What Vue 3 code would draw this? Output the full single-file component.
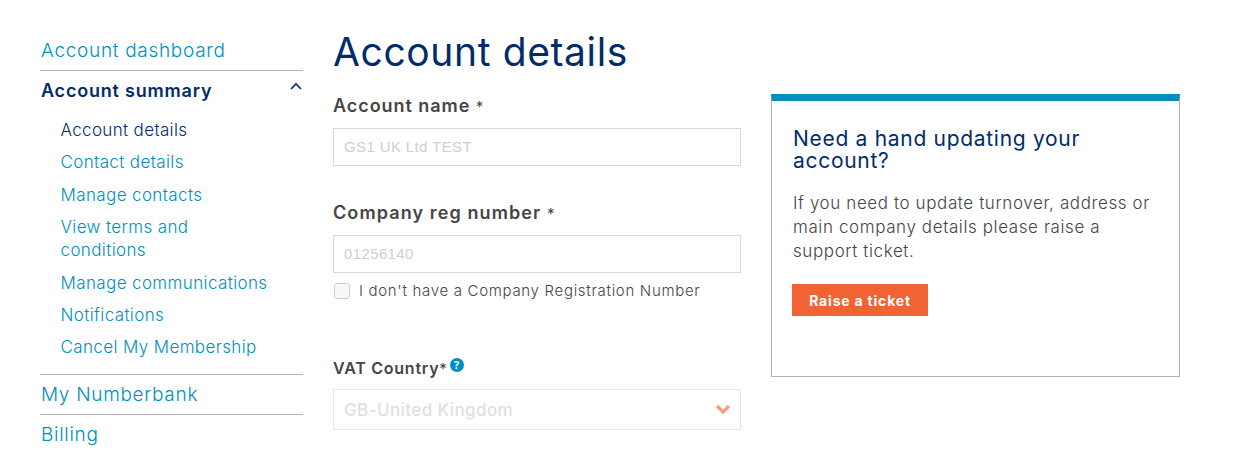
<script setup>
const subLinks = [
  { label: 'Account details', active: true },
  { label: 'Contact details' },
  { label: 'Manage contacts' },
  { label: 'View terms and conditions', wrap: true },
  { label: 'Manage communications' },
  { label: 'Notifications' },
  { label: 'Cancel My Membership' }
]
</script>

<template>
  <div class="page">
    <nav class="side">
      <a class="top first">Account dashboard</a>
      <div class="group">
        <div class="group-head">
          <span>Account summary</span>
          <svg class="caret" width="14" height="8" viewBox="0 0 14 8"><path d="M2 7 L7 2 L12 7" fill="none" stroke="#002c6c" stroke-width="1.6"/></svg>
        </div>
        <ul class="subs">
          <li v-for="l in subLinks" :key="l.label" :class="{ active: l.active, wrap: l.wrap }">{{ l.label }}</li>
        </ul>
      </div>
      <a class="top bordered">My Numberbank</a>
      <a class="top bordered">Billing</a>
    </nav>
    <main class="main">
      <h1>Account details</h1>
      <div class="cols">
        <form class="form">
          <label class="lab first-lab">Account name <span class="star">*</span></label>
          <div class="input">GS1 UK Ltd TEST</div>
          <label class="lab second-lab">Company reg number <span class="star">*</span></label>
          <div class="input">01256140</div>
          <div class="check">
            <span class="box"></span>
            <span>I don't have a Company Registration Number</span>
          </div>
          <div class="lab vat-lab">
            VAT Country<span class="star">*</span>
            <svg class="help" width="14" height="14" viewBox="0 0 14 14">
              <circle cx="7" cy="7" r="7" fill="#008fbe"/>
              <text x="7" y="11" text-anchor="middle" fill="#fff" font-size="11" font-weight="700" font-family="Open Sans, sans-serif">?</text>
            </svg>
          </div>
          <div class="select">
            <span>GB-United Kingdom</span>
            <svg width="16" height="11" viewBox="0 0 16 11"><path d="M2 2 L8 8 L14 2" fill="none" stroke="#fb9c7c" stroke-width="3.2"/></svg>
          </div>
        </form>
        <aside class="card">
          <h2>Need a hand updating your account?</h2>
          <p>If you need to update turnover, address or main company details please raise a support ticket.</p>
          <button type="button" class="btn">Raise a ticket</button>
        </aside>
      </div>
    </main>
  </div>
</template>

<style>
html, body { margin: 0; background: #fff; }
</style>

<style scoped>
.page {
  display: flex;
  height: 451px;
  overflow: hidden;
  box-sizing: border-box;
  padding: 32px 0 0 40px;
  font-family: Inter, sans-serif;
  color: #454545;
}
.side { width: 263px; flex: none; margin-right: 30px; }
.top {
  display: block;
  font-size: 19px;
  font-weight: 300;
  line-height: 26px;
  color: #008fbe;
  letter-spacing: 0.7px;
  padding-left: 1px;
}
.first { height: 38px; padding-top: 6px; box-sizing: border-box; }
.bordered { border-top: 1px solid #b1b3b3; height: 40px; padding-top: 7px; box-sizing: border-box; }
.group { border-top: 1px solid #b1b3b3; }
.group-head {
  display: flex;
  justify-content: space-between;
  font-size: 18px;
  font-weight: 600;
  line-height: 26px;
  padding: 7px 0 0 1px;
  color: #002c6c;
  letter-spacing: 0.8px;
}
.caret { margin-top: 4px; }
.subs {
  list-style: none;
  margin: 0;
  padding: 15px 0 0 20.5px;
}
.subs li {
  font-size: 17px;
  font-weight: 300;
  line-height: 23px;
  margin-bottom: 9.4px;
  color: #008fbe;
  letter-spacing: 0.38px;
}
.subs li.wrap { width: 180px; }
.subs li.active { color: #002c6c; font-weight: 350; letter-spacing: 0.35px; }
.subs li:last-child { margin-bottom: 15px; }
.main { width: 847px; flex: none; }
h1 {
  margin: 0;
  font-size: 39px;
  font-weight: 380;
  line-height: 40px;
  color: #002c6c;
  letter-spacing: 0.62px;
}
.cols { display: flex; gap: 30px; margin-top: 22px; align-items: flex-start; }
.form { width: 408px; flex: none; }
.lab {
  display: block;
  font-size: 18px;
  font-weight: 600;
  line-height: 24px;
  color: #454545;
  letter-spacing: 0.95px;
}
.first-lab { margin-bottom: 9px; }
.second-lab { margin: 35px 0 9px; letter-spacing: 1.1px; }
.star { font-weight: 400; font-size: 15px; }
.input {
  height: 38px;
  box-sizing: border-box;
  border: 1px solid #d8d8d8;
  padding: 0 10px;
  font-family: "Liberation Sans", sans-serif;
  font-size: 15px;
  line-height: 36px;
  color: #cfcfcf;
  letter-spacing: 0.38px;
}
.check {
  display: flex;
  align-items: center;
  gap: 9px;
  margin-top: 9px;
  padding-left: 1px;
  font-size: 15px;
  font-weight: 350;
  line-height: 18px;
  letter-spacing: 0.69px;
}
.box {
  width: 14px;
  height: 14px;
  border: 1px solid #cfcfcf;
  border-radius: 3px;
  background: #f7f7f7;
}
.vat-lab {
  margin-top: 56px;
  font-size: 16px;
  margin-bottom: 8px;
  letter-spacing: 0.75px;
}
.help { position: relative; top: -2px; margin-left: 2px; }
.select {
  height: 41px;
  box-sizing: border-box;
  border: 1px solid #e6e6e6;
  padding: 0 9px 0 10px;
  display: flex;
  align-items: center;
  justify-content: space-between;
  font-size: 17px;
  font-weight: 500;
  color: #e0e0e0;
  letter-spacing: 0.4px;
}
.card {
  width: 409px;
  height: 283px;
  box-sizing: border-box;
  border: 1px solid #b1b3b3;
  border-top: 7px solid #008fbe;
  padding: 27px 21px 0;
  flex: none;
}
h2 {
  margin: 0;
  max-width: 310px;
  font-size: 21px;
  font-weight: 380;
  line-height: 22px;
  color: #002c6c;
  letter-spacing: 0.7px;
}
p {
  margin: 19px 0 0;
  font-size: 17px;
  font-weight: 350;
  line-height: 24px;
  letter-spacing: 0.6px;
}
.btn {
  display: block;
  margin: 21px 0 0 -1px;
  width: 136px;
  height: 32px;
  border: 0;
  padding: 0;
  background: #f26334;
  color: #fff;
  font-family: Inter, sans-serif;
  font-size: 14px;
  font-weight: 700;
  letter-spacing: 0.8px;
}
</style>
